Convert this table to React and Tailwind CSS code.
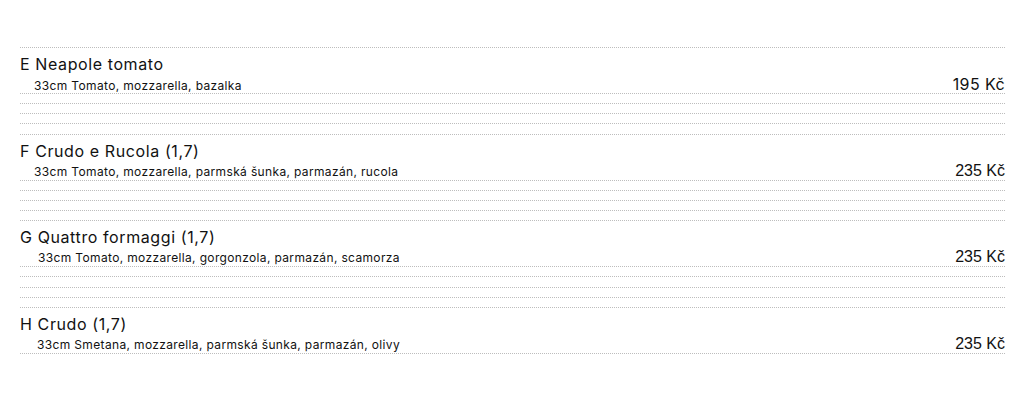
import React from 'react';

const items = [
  { name: 'E Neapole tomato', desc: '33cm Tomato, mozzarella, bazalka', price: '195 Kč', indent: 'pl-[14px]', alt: false },
  { name: 'F Crudo e Rucola (1,7)', desc: '33cm Tomato, mozzarella, parmská šunka, parmazán, rucola', price: '235 Kč', indent: 'pl-[14px]', alt: true },
  { name: 'G Quattro formaggi (1,7)', desc: '33cm Tomato, mozzarella, gorgonzola, parmazán, scamorza', price: '235 Kč', indent: 'pl-[18px]', alt: true },
  { name: 'H Crudo (1,7)', desc: '33cm Smetana, mozzarella, parmská šunka, parmazán, olivy', price: '235 Kč', indent: 'pl-[17px]', alt: true },
];

const sans = "font-['Inter','Noto_Sans',sans-serif]";

export default function App() {
  return (
    <div className="w-[1024px] h-[414px] bg-white text-[#111] pl-[20px] pr-[19px] pt-[47px]">
      <div className="border-b border-dotted border-[#bdbdbd]" />
      {items.map((it, i) => (
        <div key={i}>
          <div className="border-b border-dotted border-[#bdbdbd]">
            <div className={`${sans} text-[16px] leading-[24px] pt-[4px] tracking-[0.6px]`}>{it.name}</div>
            <div className="flex items-baseline justify-between h-[17px]">
              <span className={`${sans} text-[12px] leading-[16px] tracking-[0.35px] ${it.indent}`}>{it.desc}</span>
              <span className={`${it.alt ? "font-['Liberation_Sans',Arial,sans-serif]" : `${sans} tracking-[0.4px]`} text-[16px] leading-[16px]`}>{it.price}</span>
            </div>
          </div>
          {i < items.length - 1 && (
            <>
              <div className="h-[10.17px] border-b border-dotted border-[#bdbdbd]" />
              <div className="h-[10.17px] border-b border-dotted border-[#bdbdbd]" />
              <div className="h-[10.17px] border-b border-dotted border-[#bdbdbd]" />
              <div className="h-[10.17px] border-b border-dotted border-[#bdbdbd]" />
            </>
          )}
        </div>
      ))}
    </div>
  );
}
